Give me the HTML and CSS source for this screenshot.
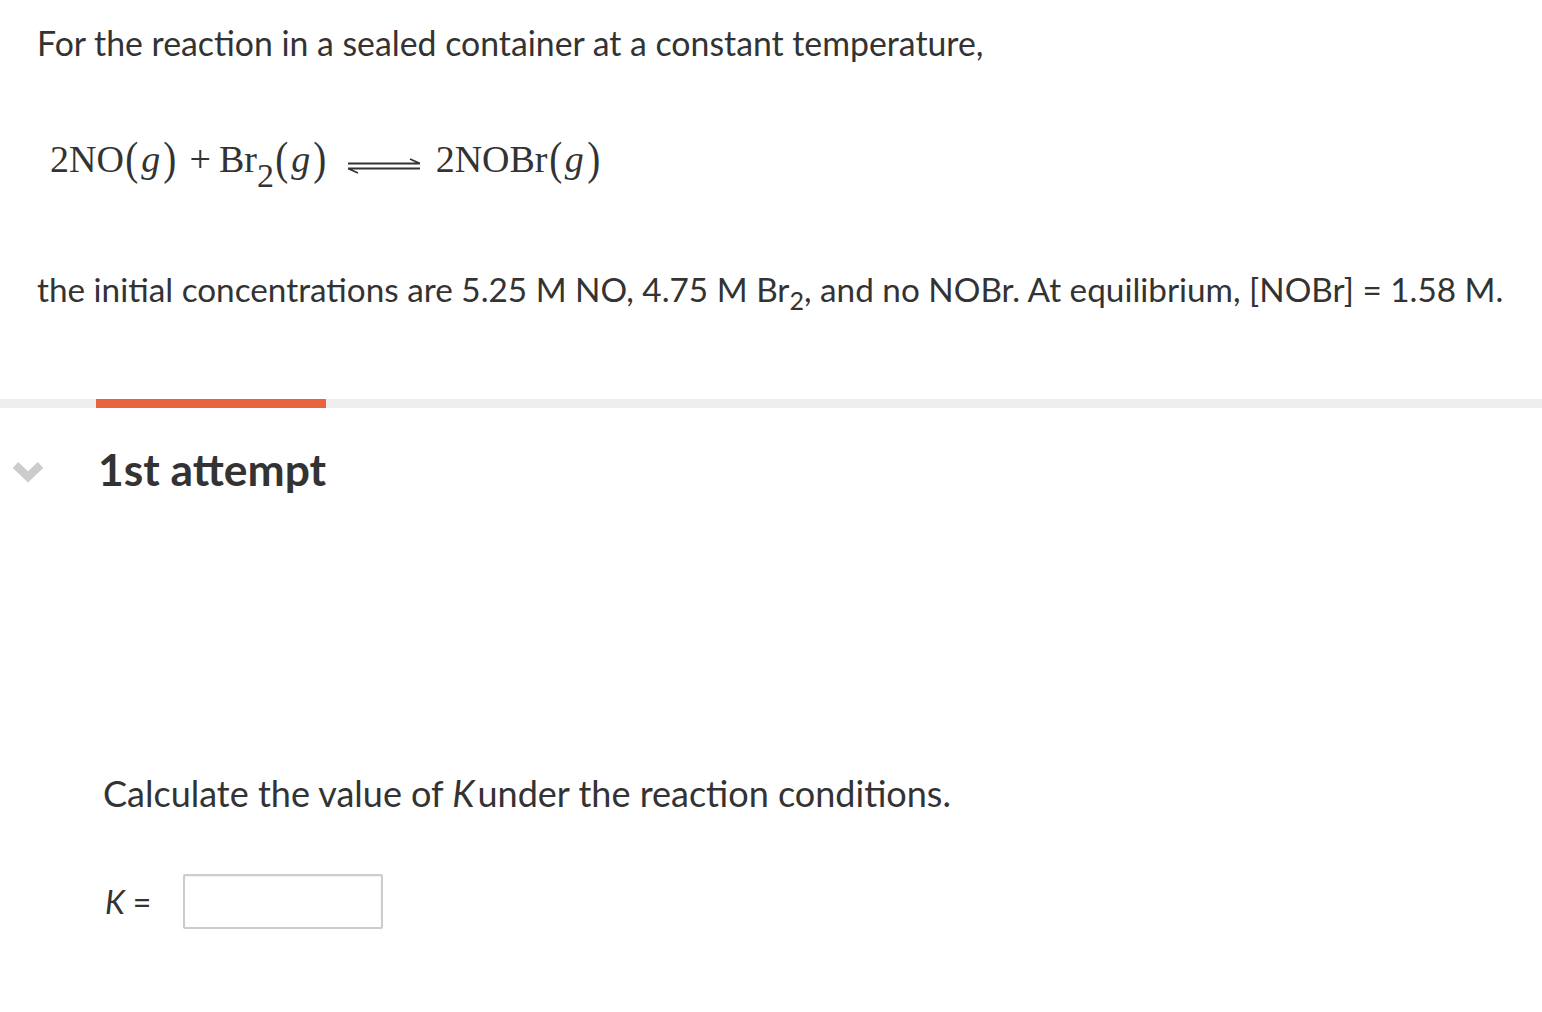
FILE: index.html
```html
<!DOCTYPE html>
<html>
<head>
<meta charset="utf-8">
<link rel="stylesheet" href="styles.css">
</head>
<body>
<div class="page">
  <p class="intro">For the reaction in a sealed container at a constant temperature,</p>
  <div class="equation"><span>2NO</span><span class="paren">(</span><i>g</i><span class="paren">)</span><span class="plus">+</span><span>Br</span><sub>2</sub><span class="paren">(</span><i>g</i><span class="paren">)</span><svg class="arrow" width="76" height="20" viewBox="0 0 76 20"><path d="M2 7.5H74M74 7.5L64 3M2 12.5H74M2 12.5L12 17" stroke="#333" stroke-width="1.8" fill="none"/></svg><span>2NOBr</span><span class="paren">(</span><i>g</i><span class="paren">)</span></div>
  <p class="conc">the initial concentrations are 5.25 M NO, 4.75 M Br<sub>2</sub>, and no NOBr. At equilibrium, [NOBr] = 1.58 M.</p>
</div>
<div class="progress"><div class="progress-fill"></div></div>
<div class="attempt">
  <svg class="chevron" width="34" height="26" viewBox="0 0 34 26"><path d="M4.5 7L17 19L29.5 7" stroke="#cccccc" stroke-width="8" fill="none" stroke-linejoin="miter"/></svg>
  <h2>1st attempt</h2>
</div>
<div class="question">
  <p class="calc">Calculate the value of <i>K</i>under the reaction conditions.</p>
  <div class="answer"><span class="klabel"><i>K</i>=</span><div class="box"></div></div>
</div>
</body>
</html>
```
FILE: styles.css
```css
body { margin: 0; background: #fff; color: #333; font-family: Lato, "Open Sans", sans-serif; }
.page { padding: 20px 0 0 37px; }
p { margin: 0; }
.intro { font-size: 33.8px; line-height: 46px; }
.equation { margin: 63px 0 0 13px; font-family: "Liberation Serif", serif; font-size: 38px; color: #333; line-height: 60px; height: 60px; white-space: nowrap; }
.equation i { font-style: italic; margin: 0 2px; }
.equation sub { font-size: 34px; vertical-align: -15px; line-height: 0; }
.paren { font-size: 46px; display: inline-block; transform: scaleX(0.85); vertical-align: -2px; }
.plus { margin: 0 8px 0 12px; }
.arrow { margin: 0 14px 0 18px; vertical-align: -4px; }
.conc { font-size: 33.3px; line-height: 46px; margin-top: 77px; }
.conc sub { font-size: 25px; line-height: 0; vertical-align: -8px; }
.progress { margin-top: 87px; height: 9px; background: #eeeeee; padding-left: 96px; }
.progress-fill { width: 230px; height: 9px; background: #e9633f; }
.attempt { display: flex; align-items: center; height: 80px; margin-top: 20px; }
.chevron { margin-left: 11px; margin-top: 5px; }
.attempt h2 { margin: 0 0 0 53px; font-size: 44.4px; font-weight: 700; color: #333; }
.question { padding-left: 103px; margin-top: 262px; }
.calc { font-size: 36px; line-height: 46px; }
.calc i { padding-right: 3px; }
.answer { display: flex; align-items: center; margin-top: 58px; }
.klabel { font-size: 32px; width: 80px; color: #333; padding-left: 2px; box-sizing: border-box; }
.klabel i { font-style: italic; padding-right: 8px; }
.box { width: 196px; height: 51px; border: 2px solid #ccc; border-radius: 2px; box-shadow: inset 0 1px 2px rgba(0,0,0,0.06); }
```
